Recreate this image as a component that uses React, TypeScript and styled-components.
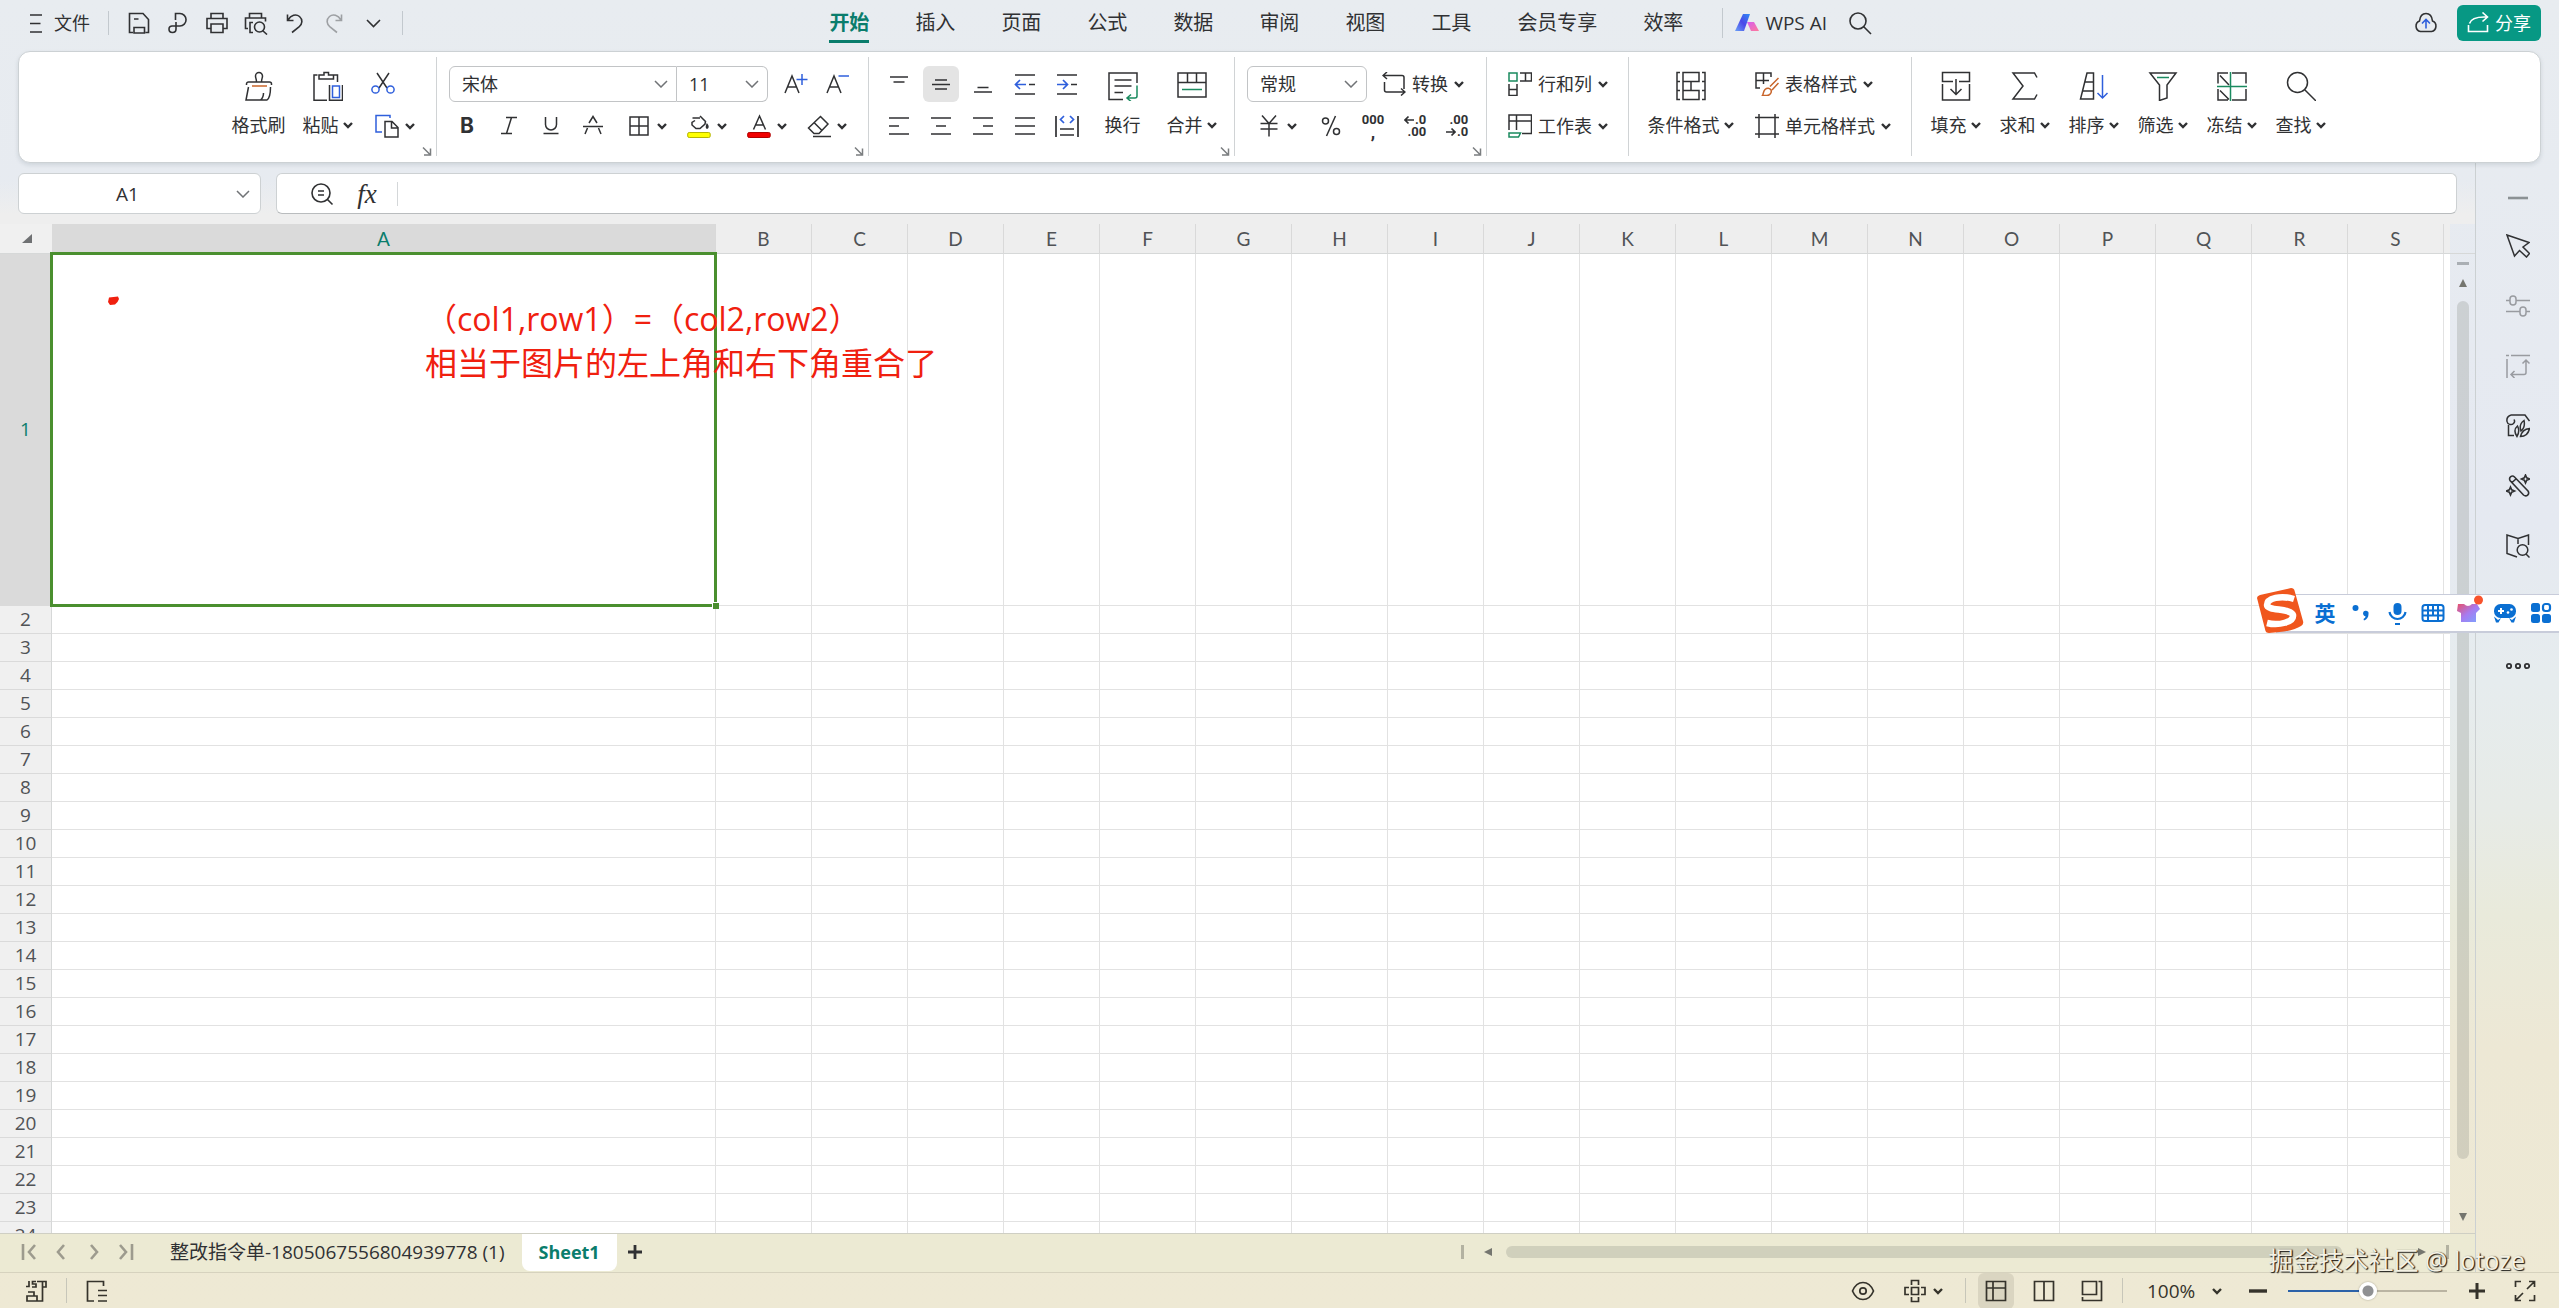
import React from "react";
import styled, { createGlobalStyle, css } from "styled-components";

const ui = `"Open Sans", "Noto Sans CJK SC", sans-serif`;
const ink = "#303133";
const teal = "#0a7d6c";
const blue = "#2f5fdc";
const green = "#1a8a5f";
const orange = "#c8642a";

const GlobalStyle = createGlobalStyle`
  *, *::before, *::after { box-sizing: border-box; }
  body { margin: 0; }
  button, input, select { font: inherit; color: inherit; margin: 0; }
`;

/* ---------- shell ---------- */

const Page = styled.div`
  position: relative;
  display: flex;
  flex-direction: column;
  height: 100vh;
  overflow: hidden;
  font-family: ${ui};
  font-size: 18px;
  line-height: 24px;
  color: ${ink};
  background: linear-gradient(180deg, #e8ecf0 0%, #e5e9f1 40%, #e6ecee 52%, #e7ebe7 62%, #e9eadb 70%, #ede8d5 80%, #eee9d4 100%);
`;

const TopBar = styled.header`
  display: flex;
  align-items: center;
  flex: none;
  height: 51px;
  padding: 0 18px 6px 18px;
`;

const Spacer = styled.div<{ $grow: number }>`
  flex: ${(p) => p.$grow} 1 0;
`;

const Divider = styled.span<{ $h?: number; $gap?: number }>`
  flex: none;
  width: 1px;
  height: ${(p) => p.$h ?? 24}px;
  margin: 0 ${(p) => p.$gap ?? 0}px;
  background: rgba(90, 100, 110, 0.26);
`;

const plainButton = css`
  display: inline-flex;
  align-items: center;
  justify-content: center;
  padding: 0;
  border: 0;
  background: none;
  color: inherit;
  white-space: nowrap;
`;

const FileButton = styled.button`
  ${plainButton};
  gap: 4px;
  padding: 0 18px 0 8px;
`;

const QuickButton = styled.button<{ $dim?: boolean }>`
  ${plainButton};
  width: 39px;
  height: 36px;
  opacity: ${(p) => (p.$dim ? 0.4 : 1)};
`;

const QuickTools = styled.div`
  display: flex;
  padding: 0 10px;
`;

const Tabs = styled.nav`
  display: flex;
  gap: 46px;
  padding-right: 39px;
`;

const Tab = styled.a<{ $active?: boolean }>`
  height: 45px;
  padding-top: 9px;
  font-size: 20px;
  line-height: 28px;
  text-decoration: none;
  color: ${(p) => (p.$active ? teal : ink)};
  font-weight: ${(p) => (p.$active ? 700 : 400)};
  background: linear-gradient(${(p) => (p.$active ? teal : "transparent")} 0 0) 0 40px / 100% 3px no-repeat;
`;

const AiWrap = styled.div`
  display: flex;
  align-items: center;
  padding-left: 12px;
`;

const AiButton = styled.button`
  ${plainButton};
  gap: 6px;
  margin-right: 20px;
  font-size: 19px;
`;

const PlainIconButton = styled.button`
  ${plainButton};
  width: 26px;
`;

const ShareButton = styled.button`
  ${plainButton};
  gap: 6px;
  height: 36px;
  width: 84px;
  margin-left: 12px;
  border-radius: 6px;
  background: #079884;
  color: #fff;
`;

/* ---------- ribbon ---------- */

const Ribbon = styled.section`
  display: flex;
  justify-content: center;
  flex: none;
  height: 112px;
  margin: 0 18px;
  border: 1px solid #ccd1d4;
  border-radius: 12px;
  background: #fff;
  box-shadow: 0 2px 4px rgba(60, 80, 90, 0.14);
  z-index: 1;
`;

const Group = styled.div`
  position: relative;
  display: flex;
  gap: 6px;
  margin: 5px 0 6px;
  padding: 9px 11px 0 12px;
  border-right: 1px solid #d0d3d5;
  &:last-child { border-right-color: transparent; }
`;

const Rows = styled.div`
  display: flex;
  flex-direction: column;
  gap: 6px;
`;

const Row = styled.div`
  display: flex;
  align-items: center;
  height: 36px;
  gap: 6px;
`;

const IconButton = styled.button<{ $on?: boolean }>`
  ${plainButton};
  width: 36px;
  height: 36px;
  border-radius: 6px;
  background: ${(p) => (p.$on ? "#e4e4e4" : "none")};
`;

const SplitButton = styled.button`
  ${plainButton};
  gap: 6px;
  width: 60px;
  height: 36px;
`;

const SplitRun = styled.div`
  display: flex;
`;

const TextButton = styled.button`
  ${plainButton};
  gap: 6px;
  height: 36px;
  padding: 0 9px;
  justify-content: flex-start;
`;

const BigButton = styled.button<{ $w?: number }>`
  ${plainButton};
  flex-direction: column;
  justify-content: flex-start;
  gap: 12px;
  width: ${(p) => p.$w ?? 63}px;
  padding-top: 5px;
`;

const BigLabel = styled.span`
  display: flex;
  align-items: center;
  gap: 4px;
`;

const Launcher = styled.button`
  ${plainButton};
  position: absolute;
  right: 4px;
  bottom: 0;
  width: 10px;
  height: 10px;
`;

const Field = styled.label<{ $w: number; $first?: boolean; $last?: boolean }>`
  display: flex;
  align-items: center;
  width: ${(p) => p.$w}px;
  height: 36px;
  padding-right: 8px;
  border: 1px solid #c2c4c6;
  border-left-width: ${(p) => (p.$first ? 1 : 0)}px;
  border-radius: ${(p) => (p.$first ? 6 : 0)}px ${(p) => (p.$last ? 6 : 0)}px ${(p) => (p.$last ? 6 : 0)}px ${(p) => (p.$first ? 6 : 0)}px;
  background: #fff;
`;

const Select = styled.select`
  flex: 1;
  min-width: 0;
  padding: 0 0 0 12px;
  border: 0;
  outline: 0;
  appearance: none;
  background: none;
`;

const FieldPair = styled.div`
  display: flex;
  margin-right: 4px;
`;

const NumIcon = styled.span`
  display: flex;
  flex-direction: column;
  align-items: flex-end;
  font: 700 13px/12px Roboto, sans-serif;
  & > span { display: flex; align-items: center; gap: 1px; }
`;

const CommaIcon = styled(NumIcon)`
  align-items: center;
  & > span:last-child { font-size: 18px; }
`;

const BoldMark = styled.span`
  font: 700 21px/24px Inter, sans-serif;
`;

/* ---------- body ---------- */

const Body = styled.div`
  display: flex;
  flex: 1;
  min-height: 0;
`;

const Main = styled.main`
  display: flex;
  flex-direction: column;
  flex: 1;
  min-width: 0;
`;

const FormulaBar = styled.div`
  display: flex;
  gap: 15px;
  flex: none;
  height: 61px;
  padding: 10px 18px 11px;
  background: linear-gradient(180deg, rgba(238, 238, 238, 0) 30%, #eeeeee 85%);
`;

const NameBox = styled.label`
  display: flex;
  align-items: center;
  width: 243px;
  height: 41px;
  padding-right: 10px;
  border: 1px solid #cdd1d3;
  border-radius: 6px;
  background: #fff;
`;

const BareInput = styled.input<{ $center?: boolean }>`
  flex: 1;
  min-width: 0;
  padding: 0;
  border: 0;
  outline: 0;
  background: none;
  font-size: 19px;
  text-align: ${(p) => (p.$center ? "center" : "left")};
`;

const FormulaBox = styled.div`
  display: flex;
  align-items: center;
  flex: 1;
  height: 41px;
  padding: 0 32px;
  border: 1px solid #cdd1d3;
  border-bottom-color: #b9bcbe;
  border-radius: 6px;
  background: #fff;
`;

const FxButton = styled.button`
  ${plainButton};
  width: 36px;
  margin-left: 14px;
  font: italic 27px/30px "Liberation Serif", serif;
`;

const SheetArea = styled.div`
  display: flex;
  flex: 1;
  min-height: 0;
`;

const GridView = styled.div`
  position: relative;
  flex: 1;
  min-width: 0;
  overflow: hidden;
  background: #fff;
`;

const Grid = styled.table`
  width: 2540px;
  table-layout: fixed;
  border-collapse: separate;
  border-spacing: 0;
`;

const Corner = styled.th`
  width: 52px;
  height: 30px;
  padding: 0 20px 0 0;
  text-align: right;
  line-height: 0;
  background: #f0f0f0;
  border-bottom: 1px solid #d6d8d8;
`;

const ColHead = styled.th<{ $w: number; $on?: boolean }>`
  width: ${(p) => p.$w}px;
  height: 30px;
  padding: 0;
  border-right: 1px solid #d9d9d9;
  border-bottom: 1px solid #d6d8d8;
  background: ${(p) => (p.$on ? "#dadada" : "#eeeeee")};
  color: ${(p) => (p.$on ? teal : "#505356")};
  font: 400 19px/28px Lato, sans-serif;
`;

const RowHead = styled.th<{ $on?: boolean }>`
  height: ${(p) => (p.$on ? 352 : 28)}px;
  padding: 0 0 2px;
  border-right: 1px solid #d6d8d8;
  border-bottom: 1px solid #dadada;
  background: ${(p) => (p.$on ? "#dadada" : "#f0f0f0")};
  color: ${(p) => (p.$on ? teal : "#505356")};
  font-size: 19px;
  font-weight: 400;
  line-height: 24px;
`;

const Cell = styled.td`
  position: relative;
  padding: 0;
  border-right: 1px solid #e2e2e2;
  border-bottom: 1px solid #e2e2e2;
`;

const Selection = styled.div`
  position: absolute;
  inset: -2px;
  border: 3px solid #4a8f2f;
  z-index: 1;
  &::after {
    content: "";
    position: absolute;
    right: -5px;
    bottom: -5px;
    width: 7px;
    height: 7px;
    border: solid #fff;
    border-width: 1px 0 0 1px;
    background: #4a8f2f;
  }
`;

const Note = styled.p`
  position: absolute;
  left: 425px;
  top: 73px;
  z-index: 2;
  margin: 0;
  font-size: 32px;
  line-height: 44px;
  white-space: nowrap;
  color: #f0200f;
`;

const RedDot = styled.svg`
  position: absolute;
  left: 107px;
  top: 72px;
  z-index: 2;
`;

const VScroll = styled.div`
  display: flex;
  flex-direction: column;
  align-items: center;
  flex: none;
  width: 25px;
  padding: 8px 0 12px;
  border-top: 1px solid #d6d8d8;
  margin-top: 29px;
`;

const VGrip = styled.span`
  width: 12px;
  height: 3px;
  background: rgba(110, 115, 120, 0.5);
`;

const VTop = styled.div`
  display: flex;
  padding-top: 14px;
`;

const VTrack = styled.div`
  flex: 1;
  width: 12px;
  margin: 14px 0;
  padding-bottom: 40px;
`;

const Thumb = styled.div`
  width: 100%;
  height: 100%;
  border-radius: 6px;
  background: rgba(120, 125, 115, 0.24);
`;

const SheetTabs = styled.footer`
  display: flex;
  align-items: center;
  flex: none;
  height: 39px;
  padding: 0 26px 2px 13px;
  border-top: 1px solid #cfcfc4;
  background: #ecead3;
`;

const NavButton = styled.button`
  ${plainButton};
  width: 32px;
  height: 32px;
  color: #9d9b8e;
`;

const SheetTab = styled.button<{ $on?: boolean }>`
  ${plainButton};
  height: 37px;
  padding: 0 17px;
  border-radius: 0 0 8px 8px;
  font-size: ${(p) => (p.$on ? 18 : 19)}px;
  font-weight: ${(p) => (p.$on ? 700 : 400)};
  color: ${(p) => (p.$on ? teal : ink)};
  background: ${(p) => (p.$on ? "#fff" : "none")};
`;

const TabStrip = styled.div`
  display: flex;
  align-items: center;
  height: 100%;
  padding-left: 12px;
`;

const HScroll = styled.div`
  display: flex;
  align-items: center;
  width: calc(40% + 14px);
  margin-left: auto;
`;

const HGrip = styled.span`
  width: 3px;
  height: 14px;
  background: rgba(110, 110, 100, 0.45);
`;

const HLeft = styled.div`
  display: flex;
  padding-left: 20px;
`;

const HTrack = styled.div`
  flex: 1;
  height: 12px;
  margin: 0 14px;
  padding-right: 62px;
`;

const SideBar = styled.aside`
  display: flex;
  flex-direction: column;
  align-items: center;
  flex: none;
  width: 84px;
  padding-top: 17px;
  border-left: 1px solid #cbd0d2;
`;

const SideButton = styled.button<{ $h?: number; $dim?: boolean }>`
  ${plainButton};
  flex: none;
  width: 60px;
  height: ${(p) => p.$h ?? 60}px;
  opacity: ${(p) => (p.$dim ? 0.42 : 1)};
`;

/* ---------- status bar ---------- */

const StatusBar = styled.footer`
  display: flex;
  align-items: center;
  gap: 12px;
  flex: none;
  height: 36px;
  padding: 0 16px 0 18px;
  border-top: 1px solid #d6d2be;
  color: #35332b;
`;

const StatusButton = styled.button<{ $on?: boolean }>`
  ${plainButton};
  width: 36px;
  height: 36px;
  border-radius: 6px;
  background: ${(p) => (p.$on ? "#dad5c1" : "none")};
`;

const ZoomField = styled.label`
  display: flex;
  align-items: center;
  width: 93px;
  padding-right: 6px;
  font-size: 19px;
`;

const ZoomSlider = styled.input`
  width: 159px;
  height: 20px;
  margin: 0;
  appearance: none;
  background: linear-gradient(90deg, #2c62a8 50%, #bab4a2 50%) center / 100% 2px no-repeat;
  &::-webkit-slider-thumb {
    appearance: none;
    width: 18px;
    height: 18px;
    border-radius: 50%;
    background: radial-gradient(circle, #8f9092 5px, #fff 6px);
    box-shadow: 0 0 2px rgba(0, 0, 0, 0.35);
  }
`;

const Watermark = styled.div`
  position: absolute;
  right: 34px;
  bottom: 30px;
  z-index: 4;
  font-size: 25px;
  line-height: 36px;
  color: #f4f1e4;
  text-shadow: 1px 1px 1px #1d1c18, 1px 0 1px #55534b;
`;

/* ---------- input method bar ---------- */

const ImeBar = styled.div`
  position: absolute;
  top: 594px;
  right: 0;
  z-index: 3;
  display: flex;
  align-items: center;
  height: 39px;
  border: solid #c8ccda;
  border-width: 1px 0 2px;
  background: #fff;
  color: #0a6fd2;
`;

const ImeLogo = styled.svg`
  flex: none;
  margin: -8px 3px -4px -20px;
`;

const ImeKey = styled.button`
  ${plainButton};
  width: 36px;
  height: 36px;
  font-size: 21px;
  font-weight: 700;
`;

/* ---------- icons ---------- */

type IconProps = { s?: number; w?: number; c?: string; children: React.ReactNode };
const Icon = ({ s = 24, w = 1.5, c = "currentColor", children }: IconProps) => (
  <svg width={s} height={s} viewBox={`0 0 ${s} ${s}`} fill="none" stroke={c} strokeWidth={w} aria-hidden>
    {children}
  </svg>
);
const P = ({ d, c, f }: { d: string; c?: string; f?: string }) => <path d={d} stroke={c} fill={f} />;

const Caret = () => (
  <svg width="10" height="8" viewBox="0 0 10 8" fill="none" stroke="currentColor" strokeWidth="2.4" aria-hidden>
    <path d="M1 2l4 4 4-4" />
  </svg>
);
const ThinCaret = () => (
  <svg width="14" height="8" viewBox="0 0 14 8" fill="none" stroke="#707376" strokeWidth="1.5" aria-hidden>
    <path d="M1 1l6 6 6-6" />
  </svg>
);
const Tri = ({ d }: { d: string }) => (
  <svg width="8" height="8" viewBox="0 0 8 8" fill="#75766f" aria-hidden>
    <path d={d} />
  </svg>
);
const Launch = () => (
  <Launcher aria-label="更多设置">
    <Icon s={10}><P c="#7b7e80" d="M1 1.5l7 7M8.5 2.5V9H2" /></Icon>
  </Launcher>
);

const FormatPainter = () => (
  <Icon s={30}>
    <P d="M12.5 11C12.5 8 11.5 7 11.5 5a3.5 3.5 0 0 1 7 0c0 2-1 3-1 6M2.5 14V13a2 2 0 0 1 2-2h21a2 2 0 0 1 2 2v1M4.5 16L2 29h21c3-2 3.5-6.5 3.5-13M16.5 29c2-1.5 3-4 3-7" />
    <P c={orange} d="M8 15H23" />
  </Icon>
);
const Paste = () => (
  <Icon s={30}>
    <P d="M14 29.2H1V4H4.5M21 4h3.5V11M6 8V4h5V1.5h4.5V4h5V8zM16.5 14V29.2H29.5V14" />
    <P c={blue} d="M19.5 15h7v11.5h-7z" />
  </Icon>
);
const Cut = () => (
  <Icon>
    <P d="M6 1l10 15M18 1L8 16" />
    <circle cx="4.5" cy="17.5" r="3.6" stroke={blue} /><circle cx="19.5" cy="17.5" r="3.6" stroke={blue} />
  </Icon>
);
const Copy = () => (
  <Icon>
    <P c={blue} d="M7 18H1V1.5H15V4" />
    <P d="M10 7.5h7l6 6V23H10zM16.5 7.5V14H23" />
  </Icon>
);
const Wrap = () => (
  <Icon s={30}>
    <P d="M15 28.5H1V2H29V12M6.5 9H23.5M6.5 15H23.5M6.5 21.5H15" />
    <P c={green} d="M29 14.5V25a2 2 0 0 1-2 2H19M23 23.5L19 27l4 3.5" />
  </Icon>
);
const Merge = () => (
  <Icon s={30}><P d="M1 2H29V26H1zM1 11.5H29M10.5 2V11.5M19.5 2V11.5" /><P c={green} d="M5 18.5H25" /></Icon>
);
const CondFmt = () => (
  <Icon s={30}>
    <P d="M4 1.5H1V28.5H4M26 1.5H29V28.5H26M7 1.5H23V10.5H7zM7 19.5H23V28.5H7zM1 10.5H4M1 19.5H4M26 10.5H29M26 19.5H29M7 10.5V19.5M15 10.5V19.5" />
  </Icon>
);
const Fill = () => (
  <Icon s={30}><P d="M12 10.5H1.5V1.5H28.5V10.5H18M1.5 13V29H28.5V13M15 8V23M9.5 18L15 23.5 20.5 18" /></Icon>
);
const Sum = () => <Icon s={30}><P d="M27 6.5L24.5 2H3L13 15 3 28H24.5L27 23.5" /></Icon>;
const Sort = () => (
  <Icon s={30}><P d="M8 2H14.5V28H1.5zM6 11H14.5M4 20H14.5" /><P c={blue} d="M23.5 4V27M18.5 22L23.5 27 28.5 22" /></Icon>
);
const Filter = () => (
  <Icon s={30}><P d="M2 2H28L19 14V27L11.5 29.5V14z" /><P c={green} d="M9 6.5H21" /></Icon>
);
const Freeze = () => (
  <Icon s={30}>
    <P d="M1 12.5V2H11M15 2H29V12.5M29 18V29H15M11 29H1V18M3 4.5L12 14M3 19.5L12 28.5" />
    <P c={green} d="M0 15.5H30M13.5 1V30" />
  </Icon>
);
const Find = () => <Icon s={30}><circle cx="11.5" cy="11.5" r="10" /><P d="M18.5 18.5L30 30" /></Icon>;
const RowsCols = () => (
  <Icon><P c={green} d="M1 1h8v8H1z" /><P d="M12 1H23.5V9H12M17.5 1V9M1 12V23.5H9V12M1 17.5H9" /></Icon>
);
const Worksheet = () => (
  <Icon><P d="M1 16V1H23.5V19.5H14M1 7H23.5M8.5 1V16" /><P c={green} d="M1 19H12.5L10.5 23H1z" /></Icon>
);
const TableStyle = () => (
  <Icon>
    <P d="M5 16H1V1H16V5M1 8.5H14M8.5 1V12" />
    <P c={orange} d="M23.5 6L15 14.5M23.5 11L17 18M7.5 23.5c1-1.5.5-4 2.5-6 2-1.8 5-1.5 6 .5 1 2.5-1 5.5-4 5.5z" />
  </Icon>
);
const CellStyle = () => <Icon><P d="M4 0V24M20 0V24M0 3.5H24M0 20H24" /></Icon>;
const Convert = () => (
  <Icon><P d="M5 0L1 3.5 5 7M1 3.5H20a2 2 0 0 1 2 2V17M2.5 10V18a2 2 0 0 0 2 2H23M19 16.5L23 20 19 23.5" /></Icon>
);
const aligns: Record<string, string> = {
  top: "M3 5H21M6.5 10H17.5",
  middle: "M6 8H18M3 12.5H21M6 17H18",
  bottom: "M6.5 15.5H17.5M3 20H21",
  left: "M2 4H22M2 12H12M2 20H22",
  center: "M2 4H22M7 12H17M2 20H22",
  right: "M2 4H22M12 12H22M2 20H22",
  justify: "M2 4H22M2 12H22M2 20H22",
};
const Align = ({ k }: { k: string }) => <Icon><P d={aligns[k]} /></Icon>;
const Indent = ({ out }: { out?: boolean }) => (
  <Icon w={1.7}>
    <P d="M2 3H22M16 12.5H22M2 22H22" />
    <P c={blue} d={out ? "M13 12.5H3M7 8L2.5 12.5 7 17" : "M2 12.5H12M8 8L12.5 12.5 8 17"} />
  </Icon>
);
const Distribute = () => (
  <Icon w={1.7}><P d="M1 2V23M23 2V23M5 15H19M5 21H19" /><P c={blue} d="M9 2L5.5 5.5 9 9M15 2L18.5 5.5 15 9" /></Icon>
);
const Search = () => <Icon w={1.6}><circle cx="10" cy="10" r="8" /><P d="M15.5 15.5L23 23" /></Icon>;
const ArrowMini = ({ d }: { d: string }) => (
  <svg width="10" height="10" viewBox="0 0 10 10" fill="none" stroke="currentColor" strokeWidth="1.7" aria-hidden><path d={d} /></svg>
);
const AiLogo = () => (
  <svg width="24" height="18" viewBox="0 0 24 18" aria-hidden>
    <defs>
      <linearGradient id="aiBlue" x1="1" y1="0" x2="0" y2="1"><stop offset="0" stopColor="#2f8cf5" /><stop offset=".5" stopColor="#4a48e8" /><stop offset="1" stopColor="#6aa2f7" /></linearGradient>
      <linearGradient id="aiPink" x1="0" y1="0" x2="1" y2="1"><stop offset="0" stopColor="#d65df0" /><stop offset="1" stopColor="#ff7a9a" /></linearGradient>
    </defs>
    <path d="M8 0H15L9 17H0z" fill="url(#aiBlue)" /><path d="M12 8H19L24 17H16z" fill="url(#aiPink)" />
  </svg>
);

const quick = [
  ["保存", "M6 21.5H2.5V2.5H16L21.5 8.5V21.5H18.5M7 22V16.5H17.5V22zM7 8H11.5"],
  ["输出为PDF", "M9.5 9V2.5H14a6 6.2 0 0 1 0 12.5H6.5a3 3 0 0 0-3.5 3c0 2 1.5 3.5 3.5 3.5S10 20 10 18V11"],
  ["打印", "M6 7V2.5H18V7M5.5 17.5H2V7.5H22V17.5H18.5M6 13H18V21.5H6z"],
  ["打印预览", "M5.5 6.5V2.5H17.5V6.5M4 17.5H1.5V7H21.5V10.5M9 11.5H6V21.5H9M18.5 19.5L23 23.5"],
  ["撤销", "M4.5 3.5V9.5H10.5M5 9C8 4 13 2.5 16.5 5.5s3 7.5-.5 10.5L9 21.5"],
  ["恢复", "M19.5 3.5V9.5H13.5M19 9C16 4 11 2.5 7.5 5.5s-3 7.5.5 10.5L15 21.5"],
  ["更多", "M6 9L12.5 15.5 19 9"],
];
const menu = ["开始", "插入", "页面", "公式", "数据", "审阅", "视图", "工具", "会员专享", "效率"];
const editing: [string, React.ReactNode][] = [
  ["填充", <Fill />], ["求和", <Sum />], ["排序", <Sort />], ["筛选", <Filter />], ["冻结", <Freeze />], ["查找", <Find />],
];
const columns = "ABCDEFGHIJKLMNOPQRS".split("").concat("");
const rowNumbers = Array.from({ length: 24 }, (_, i) => i + 1);

const Big = ({ icon, text, caret = true }: { icon: React.ReactNode; text: string; caret?: boolean }) => (
  <BigButton>{icon}<BigLabel>{text}{caret && <Caret />}</BigLabel></BigButton>
);

export default function App() {
  return (
    <Page>
      <GlobalStyle />
      <TopBar>
        <FileButton>
          <Icon w={1.6}><P d="M4 4H16M4 12.5H14.5M4 21H16" /></Icon>
          文件
        </FileButton>
        <Divider />
        <QuickTools>
          {quick.map(([name, d], i) => (
            <QuickButton key={name} aria-label={name} $dim={i === 5}>
              <Icon w={1.6}><P d={d} />{i === 3 && <circle cx="15.5" cy="16" r="5" />}</Icon>
            </QuickButton>
          ))}
        </QuickTools>
        <Divider />
        <Spacer $grow={4} />
        <Tabs>
          {menu.map((m, i) => <Tab key={m} href="#" $active={i === 0}>{m}</Tab>)}
        </Tabs>
        <Divider $h={30} />
        <AiWrap>
          <AiButton><AiLogo />WPS AI</AiButton>
          <PlainIconButton aria-label="搜索"><Search /></PlainIconButton>
        </AiWrap>
        <Spacer $grow={5} />
        <QuickButton aria-label="云同步">
          <Icon w={1.6}>
            <P d="M6.5 20.5a5.5 5.5 0 0 1-1-10.5C6 5.5 8.5 2.5 12 2.5s6 3 6.5 7.5a5.5 5.5 0 0 1-1 10.5z" />
            <P c={blue} d="M12 17.5V9M8 12.5L12 8.5 16 12.5" />
          </Icon>
        </QuickButton>
        <ShareButton>
          <Icon s={22} w={1.6}><P d="M1.5 13V19.5H20.5V13M2.5 11.5C4 6.5 9 4.5 20 5M15.5 .5L20.5 5 15.5 9.5" /></Icon>
          分享
        </ShareButton>
      </TopBar>

      <Ribbon>
        <Group>
          <Big icon={<FormatPainter />} text="格式刷" caret={false} />
          <Big icon={<Paste />} text="粘贴" />
          <Rows>
            <Row><IconButton aria-label="剪切"><Cut /></IconButton></Row>
            <Row><SplitButton aria-label="复制"><Copy /><Caret /></SplitButton></Row>
          </Rows>
          <Launch />
        </Group>

        <Group>
          <Rows>
            <Row>
              <FieldPair>
                <Field $w={228} $first><Select aria-label="字体"><option>宋体</option></Select><ThinCaret /></Field>
                <Field $w={91} $last><Select aria-label="字号"><option>11</option></Select><ThinCaret /></Field>
              </FieldPair>
              <IconButton aria-label="增大字号">
                <Icon><P d="M1 21L8 4 15 21M3.5 15H12.5" /><P c={blue} d="M18 2V13M12.5 7.5H23.5" /></Icon>
              </IconButton>
              <IconButton aria-label="减小字号">
                <Icon><P d="M1 21L8 4 15 21M3.5 15H12.5" /><P c={blue} d="M12.5 4H23" /></Icon>
              </IconButton>
            </Row>
            <Row>
              <IconButton aria-label="加粗"><BoldMark>B</BoldMark></IconButton>
              <IconButton aria-label="倾斜"><Icon><P d="M9 3.5H20M4 19.5H15M14.5 3.5L9.5 19.5" /></Icon></IconButton>
              <IconButton aria-label="下划线"><Icon><P d="M6.5 3V10.5a5.5 5.5 0 0 0 11 0V3M4.5 19.5H19.5" /></Icon></IconButton>
              <IconButton aria-label="删除线"><Icon><P d="M8 9L12 2.5 16 9M2 12.5H22M6.5 14L4 20M17.5 14L20 20" /></Icon></IconButton>
              <SplitRun>
                <SplitButton aria-label="边框"><Icon><P d="M3 3H21V21H3zM12 3V21M3 12H21" /></Icon><Caret /></SplitButton>
                <SplitButton aria-label="填充颜色">
                  <Icon>
                    <P d="M5.5 4H13M13 2L18.5 7.5 18 10 13 14.5H9L5 11V8.5L8 6.5" />
                    <P f={ink} d="M20 10.5c1 1.5 1.5 2.5.5 3.5-1 .5-1.5-1-.5-3.5z" />
                    <rect x=".7" y="18.5" width="22.5" height="5" rx="1.5" fill="#ff0" stroke="#b5b500" strokeWidth="1" />
                  </Icon>
                  <Caret />
                </SplitButton>
                <SplitButton aria-label="字体颜色">
                  <Icon>
                    <P d="M6.5 15.5L12.5 2 18.5 15.5M8.5 11H16.5" />
                    <rect x=".7" y="18.5" width="22.5" height="5" rx="1.5" fill="#f00000" stroke="#b00000" strokeWidth="1" />
                  </Icon>
                  <Caret />
                </SplitButton>
                <SplitButton aria-label="清除">
                  <Icon><P d="M13.5 2.5L21 10 12 19.5H7L1.5 14zM7 8.5L14.5 16M6 22.5H24" /></Icon>
                  <Caret />
                </SplitButton>
              </SplitRun>
            </Row>
          </Rows>
          <Launch />
        </Group>

        <Group>
          <Rows>
            <Row>
              <IconButton aria-label="顶端对齐"><Align k="top" /></IconButton>
              <IconButton aria-label="垂直居中" $on><Align k="middle" /></IconButton>
              <IconButton aria-label="底端对齐"><Align k="bottom" /></IconButton>
              <IconButton aria-label="减少缩进"><Indent out /></IconButton>
              <IconButton aria-label="增加缩进"><Indent /></IconButton>
            </Row>
            <Row>
              <IconButton aria-label="左对齐"><Align k="left" /></IconButton>
              <IconButton aria-label="水平居中"><Align k="center" /></IconButton>
              <IconButton aria-label="右对齐"><Align k="right" /></IconButton>
              <IconButton aria-label="两端对齐"><Align k="justify" /></IconButton>
              <IconButton aria-label="分散对齐"><Distribute /></IconButton>
            </Row>
          </Rows>
          <Big icon={<Wrap />} text="换行" caret={false} />
          <Big icon={<Merge />} text="合并" />
          <Launch />
        </Group>

        <Group>
          <Rows>
            <Row>
              <Field $w={120} $first $last><Select aria-label="数字格式"><option>常规</option></Select><ThinCaret /></Field>
              <TextButton><Convert />转换<Caret /></TextButton>
            </Row>
            <Row>
              <SplitButton aria-label="货币">
                <Icon><P d="M5 1.5L12 9.5 19 1.5M3.5 9.5H20.5M3.5 15H20.5M12 9.5V22.5" /></Icon><Caret />
              </SplitButton>
              <IconButton aria-label="百分比">
                <Icon><circle cx="6.5" cy="7" r="3" /><circle cx="17.5" cy="17.5" r="3" /><P d="M16.5 2L7.5 22" /></Icon>
              </IconButton>
              <IconButton aria-label="千位分隔"><CommaIcon><span>000</span><span>,</span></CommaIcon></IconButton>
              <IconButton aria-label="增加小数位">
                <NumIcon><span><ArrowMini d="M10 5H1M4.5 1.5L1 5 4.5 8.5" />.0</span><span>.00</span></NumIcon>
              </IconButton>
              <IconButton aria-label="减少小数位">
                <NumIcon><span>.00</span><span><ArrowMini d="M0 5H9M5.5 1.5L9 5 5.5 8.5" />.0</span></NumIcon>
              </IconButton>
            </Row>
          </Rows>
          <Launch />
        </Group>

        <Group>
          <Rows>
            <TextButton><RowsCols />行和列<Caret /></TextButton>
            <TextButton><Worksheet />工作表<Caret /></TextButton>
          </Rows>
        </Group>

        <Group>
          <BigButton $w={99}><CondFmt /><BigLabel>条件格式<Caret /></BigLabel></BigButton>
          <Rows>
            <TextButton><TableStyle />表格样式<Caret /></TextButton>
            <TextButton><CellStyle />单元格样式<Caret /></TextButton>
          </Rows>
        </Group>

        <Group>
          {editing.map(([text, icon]) => <Big key={text} icon={icon} text={text} />)}
        </Group>
      </Ribbon>

      <Body>
        <Main>
          <FormulaBar>
            <NameBox>
              <BareInput $center defaultValue="A1" aria-label="名称框" />
              <ThinCaret />
            </NameBox>
            <FormulaBox>
              <PlainIconButton aria-label="浏览公式">
                <Icon w={1.6}><circle cx="11" cy="11" r="9" /><P d="M17.5 17.5L22.5 22.5M8 9H14M8 13H14" /></Icon>
              </PlainIconButton>
              <FxButton>fx</FxButton>
              <Divider $gap={12} />
              <BareInput aria-label="编辑栏" />
            </FormulaBox>
          </FormulaBar>

          <SheetArea>
            <GridView>
              <Grid>
                <thead>
                  <tr>
                    <Corner><svg width="10" height="9" viewBox="0 0 10 9" fill="#6f7173" aria-hidden><path d="M10 0V9H0z" /></svg></Corner>
                    {columns.map((c, i) => <ColHead key={i} $w={i === 0 ? 664 : 96} $on={i === 0}>{c}</ColHead>)}
                  </tr>
                </thead>
                <tbody>
                  {rowNumbers.map((n) => (
                    <tr key={n}>
                      <RowHead $on={n === 1}>{n}</RowHead>
                      {columns.map((c, i) => <Cell key={i}>{n === 1 && i === 0 && <Selection />}</Cell>)}
                    </tr>
                  ))}
                </tbody>
              </Grid>
              <RedDot width="12" height="10" viewBox="0 0 12 10" fill="#f0200f" aria-hidden>
                <path d="M2 1.5L11 .5 12 3 10.5 6 8 8.5 3 9 1 6z" />
              </RedDot>
              <Note>（col1,row1）=（col2,row2）<br />相当于图片的左上角和右下角重合了</Note>
            </GridView>
            <VScroll>
              <VGrip />
              <VTop><Tri d="M4 0L8 8H0z" /></VTop>
              <VTrack><Thumb /></VTrack>
              <Tri d="M0 0H8L4 8z" />
            </VScroll>
          </SheetArea>

          <SheetTabs>
            <NavButton aria-label="第一张"><Icon w={2.6}><P d="M6 4V20M18 5L12 12 18 19" /></Icon></NavButton>
            <NavButton aria-label="上一张"><Icon w={2.6}><P d="M15 5L9 12 15 19" /></Icon></NavButton>
            <NavButton aria-label="下一张"><Icon w={2.6}><P d="M10 5L16 12 10 19" /></Icon></NavButton>
            <NavButton aria-label="最后一张"><Icon w={2.6}><P d="M7 5L13 12 7 19M19 4V20" /></Icon></NavButton>
            <TabStrip>
              <SheetTab>整改指令单-1805067556804939778 (1)</SheetTab>
              <SheetTab $on>Sheet1</SheetTab>
              <IconButton aria-label="新建工作表"><Icon s={16} w={2.8}><P d="M8 1V15M1 8H15" /></Icon></IconButton>
            </TabStrip>
            <HScroll>
              <HGrip />
              <HLeft><Tri d="M8 0V8L0 4z" /></HLeft>
              <HTrack><Thumb /></HTrack>
              <Tri d="M0 0V8L8 4z" />
              <HLeft><HGrip /></HLeft>
            </HScroll>
          </SheetTabs>
        </Main>

        <SideBar>
          <SideButton $h={36} aria-label="收起"><Icon w={2.6} c="#8b9194"><P d="M2 12H22" /></Icon></SideButton>
          <SideButton aria-label="选择"><Icon><P d="M1 1L23 8.5 17 13 23.5 19.5 20.5 23 13.5 16.5 8.5 22z" /></Icon></SideButton>
          <SideButton $dim aria-label="属性">
            <Icon><rect x="4" y="2" width="6" height="9" rx="3" /><rect x="14" y="13" width="6" height="9" rx="3" /><P d="M0 6.5H4M10 6.5H24M0 17.5H14M20 17.5H24" /></Icon>
          </SideButton>
          <SideButton $dim aria-label="分析">
            <Icon><P d="M5 1.5H24M1 5V24M0 1.5H3M5 20.5H18a2 2 0 0 0 2-2V6M16.5 9.5L20 6 23.5 9.5M8.5 17L5 20.5 8.5 24" /></Icon>
          </SideButton>
          <SideButton aria-label="模板">
            <Icon><P d="M8 21.5H2.5V11M5 1H19L23.5 7M5 1C2 2 .5 4.5 1 7.5s4.5 4 6.5 2S8.5 6.5 8 5.5M11 22.5C8 18 8.5 14.5 11.5 12 13.5 15.5 13 19 11 22.5zM15 17C13.5 13 14.5 9 18 6.5 19 11 18 14.5 15 17zM14.5 22.5C15.5 18 19 15 23.5 14.5 22.5 19.5 19 22.5 14.5 22.5z" /></Icon>
          </SideButton>
          <SideButton aria-label="智能工具">
            <Icon w={1.6}><P d="M4 6.5C2.5 3.5 6 .5 8.5 3L22 17C24 20 20.5 23.5 17.5 21zM6 8.5L10.5 4.5M19.5 1L20.7 3.8 23.5 5 20.7 6.2 19.5 9 18.3 6.2 15.5 5 18.3 3.8zM4.5 13L5.7 15.8 8.5 17 5.7 18.2 4.5 21 3.3 18.2 .5 17 3.3 15.8z" /></Icon>
          </SideButton>
          <SideButton aria-label="查阅">
            <Icon><P d="M11 23L1 19.5V1L12 4.5 22.5 1V11M12 4.5V10M20 20L23.5 23.5" /><circle cx="16.5" cy="16" r="5.3" /></Icon>
          </SideButton>
          <SideButton aria-label="帮助" />
          <SideButton aria-label="更多">
            <Icon w={1.8}><circle cx="3" cy="12" r="2.2" /><circle cx="12" cy="12" r="2.2" /><circle cx="21" cy="12" r="2.2" /></Icon>
          </SideButton>
        </SideBar>
      </Body>

      <StatusBar>
        <StatusButton aria-label="JS 宏"><Icon w={1.7}><P d="M5 2V7.5H2M12 2.5H8.5V5H12V8H8M13 2.5H22V8H18.5M18.5 2.5V22H12M4 13H10V17M3 17H13V22H3z" /></Icon></StatusButton>
        <Divider $h={25} />
        <StatusButton aria-label="目录"><Icon w={1.7}><P d="M9 22H2.5V2.5H18.5V7M13 11.5H22M13 16.5H22M13 22H22" /></Icon></StatusButton>
        <Spacer $grow={1} />
        <StatusButton aria-label="护眼模式">
          <Icon w={1.7}><P d="M1.5 12C4 6 8 3.5 12 3.5S20 6 22.5 12C20 18 16 20.5 12 20.5S4 18 1.5 12z" /><circle cx="12" cy="12" r="3.2" /></Icon>
        </StatusButton>
        <SplitButton aria-label="阅读模式">
          <Icon w={1.7}><P d="M8.5 8.5H15.5V15.5H8.5zM8.5 6V1.5H15.5V6M8.5 18V22.5H15.5V18M6 8.5H2V15.5H6M18 8.5H22V15.5H18" /></Icon>
          <Caret />
        </SplitButton>
        <Divider $h={25} />
        <StatusButton $on aria-label="普通视图"><Icon w={1.7}><P d="M2.5 2.5H21.5V21.5H2.5zM2.5 9H21.5M9 2.5V21.5" /></Icon></StatusButton>
        <StatusButton aria-label="分页预览"><Icon w={1.7}><P d="M2.5 2.5H21.5V21.5H2.5zM12 2.5V21.5" /></Icon></StatusButton>
        <StatusButton aria-label="页面布局"><Icon w={1.7}><P d="M2.5 15.5V2.5H16.5V15.5zM2.5 18V21.5H21.5V2.5H18.5" /></Icon></StatusButton>
        <Divider $h={25} />
        <ZoomField><Select aria-label="缩放比例"><option>100%</option></Select><Caret /></ZoomField>
        <StatusButton aria-label="缩小"><Icon w={3.4}><P d="M3 12H21" /></Icon></StatusButton>
        <ZoomSlider type="range" defaultValue={50} aria-label="缩放" />
        <StatusButton aria-label="放大"><Icon s={16} w={3}><P d="M8 0V16M0 8H16" /></Icon></StatusButton>
        <StatusButton aria-label="全屏"><Icon w={1.7}><P d="M2.5 8V2.5H8M16 2.5H21.5V8M21.5 2.5L14 10M2.5 16V21.5H8M2.5 21.5L10 14M16 21.5H21.5V16" /></Icon></StatusButton>
      </StatusBar>

      <Watermark>掘金技术社区 @ lotoze</Watermark>

      <ImeBar>
        <ImeLogo width="48" height="48" viewBox="0 0 48 48" aria-hidden>
          <path d="M4 8L35 1q3 0 3.5 2.5L47 34q1 3-2 5-9 6-32 7-3 0-3.5-2L1 11q0-2 3-3z" fill="#f0561d" />
          <path d="M38 12C25 8 11 11 11 18c0 6 24 3 26 10 1 7-14 11-26 8" fill="none" stroke="#fff" strokeWidth="6.5" />
        </ImeLogo>
        <ImeKey>英</ImeKey>
        <ImeKey aria-label="标点">
          <svg width="20" height="20" viewBox="0 0 20 20" fill="currentColor" aria-hidden><circle cx="4.5" cy="5" r="3" /><path d="M12 10a2.7 2.7 0 1 1 5.5 1c0 3-1.5 5.5-4.5 6.5l-.5-1.5c1.5-.8 2-1.5 2-2.7-1.5 0-2.5-1.5-2.5-3.3z" /></svg>
        </ImeKey>
        <ImeKey aria-label="语音">
          <Icon w={2.2}><rect x="8.5" y="2" width="8" height="12" rx="4" fill="currentColor" stroke="none" /><P d="M4.5 11c.5 4 4 7 8 7s7.5-3 8-7M10 23H15" /></Icon>
        </ImeKey>
        <ImeKey aria-label="键盘">
          <Icon w={2}><rect x="1.5" y="4" width="21" height="16" rx="2.5" /><P d="M2 9.5H22M2 14.5H22M7 5V14M12 5V14M17 5V14M7 15V19M17 15V19" /></Icon>
        </ImeKey>
        <ImeKey aria-label="皮肤">
          <svg width="28" height="36" viewBox="0 0 28 36" aria-hidden>
            <defs><linearGradient id="shirt" x1="0" y1="0" x2="1" y2="1"><stop offset="0" stopColor="#e8506a" /><stop offset=".5" stopColor="#a77bf0" /><stop offset="1" stopColor="#7aa5ff" /></linearGradient></defs>
            <path d="M3 9H9q4 4 8 0H22L25 14 21 18V27H6V18L2 16z" fill="url(#shirt)" /><circle cx="23.5" cy="5" r="4.5" fill="#f8532c" />
          </svg>
        </ImeKey>
        <ImeKey aria-label="游戏">
          <svg width="24" height="24" viewBox="0 0 24 24" fill="currentColor" aria-hidden>
            <rect x="1" y="3" width="22" height="14" rx="6.5" /><path d="M1 15.5L5 19 8 17 5.5 21.5H3zM23 15.5L19 19 16 17 18.5 21.5H21z" />
            <path d="M8 7V13M5 10H11" stroke="#fff" strokeWidth="2" /><circle cx="15" cy="11.5" r="1.3" fill="#fff" /><circle cx="18.5" cy="8.5" r="1.3" fill="#fff" />
          </svg>
        </ImeKey>
        <ImeKey aria-label="工具箱">
          <svg width="22" height="22" viewBox="0 0 22 22" fill="currentColor" aria-hidden>
            <rect x="1" y="1" width="9" height="9" rx="2.5" /><rect x="1" y="12" width="9" height="9" rx="2.5" /><rect x="12" y="12" width="9" height="9" rx="2.5" />
            <rect x="13" y="2" width="7" height="7" rx="2.5" fill="none" stroke="currentColor" strokeWidth="2.2" />
          </svg>
        </ImeKey>
      </ImeBar>
    </Page>
  );
}
